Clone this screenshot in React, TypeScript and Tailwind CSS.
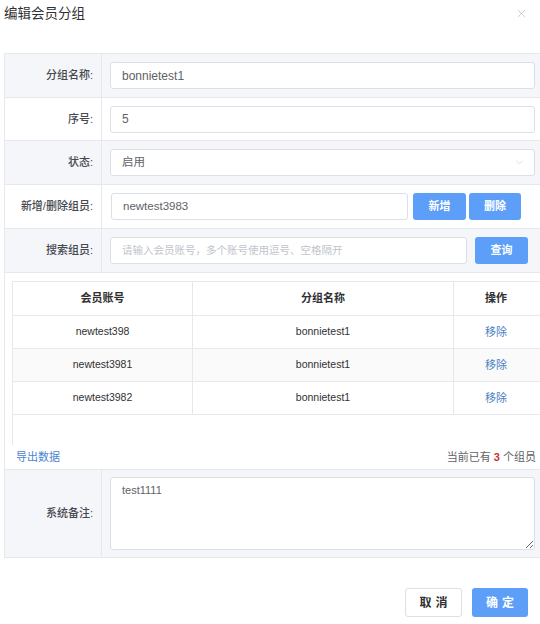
import { X, ChevronDown } from 'lucide-react';

const font = { fontFamily: '"Liberation Sans", "Noto Sans CJK SC", sans-serif' };

function Label({ children }: { children: React.ReactNode }) {
  return (
    <div className="w-[97px] shrink-0 self-stretch border-r border-[#e6e8ee] flex items-center justify-end pr-[8px] text-[11px] font-medium text-[#45484f]">
      {children}
    </div>
  );
}

const rows = [
  { acc: 'newtest398', group: 'bonnietest1' },
  { acc: 'newtest3981', group: 'bonnietest1' },
  { acc: 'newtest3982', group: 'bonnietest1' },
];

export default function App() {
  return (
    <div className="w-[540px] h-[624px] overflow-hidden bg-white relative" style={font}>
      <div className="flex items-center justify-between h-[27px] pl-[4px] pr-[12px] pt-[1px]">
        <span className="text-[13.5px] text-[#303133]">编辑会员分组</span>
        <X size={13} strokeWidth={1.1} className="text-[#a8abb2] -mt-[2px]" />
      </div>

      <div className="mt-[26px] ml-[4px] w-[540px] border-t border-l border-[#e6e8ee]">
        {/* 分组名称 */}
        <div className="flex items-center h-[44px] border-b border-[#e6e8ee] bg-[#f5f6fa]">
          <Label>分组名称:</Label>
          <div className="pl-[8px]">
            <div className="w-[425px] h-[27px] rounded-[3px] border border-[#dcdfe6] bg-white flex items-center pl-[11px] text-[12px] text-[#606266]">
              bonnietest1
            </div>
          </div>
        </div>

        {/* 序号 */}
        <div className="flex items-center h-[43px] border-b border-[#e6e8ee] bg-white">
          <Label>序号:</Label>
          <div className="pl-[8px]">
            <div className="w-[425px] h-[27px] rounded-[3px] border border-[#dcdfe6] bg-white flex items-center pl-[11px] text-[12px] text-[#606266]">
              5
            </div>
          </div>
        </div>

        {/* 状态 */}
        <div className="flex items-center h-[44px] border-b border-[#e6e8ee] bg-[#f5f6fa]">
          <Label>状态:</Label>
          <div className="pl-[8px]">
            <div className="w-[425px] h-[27px] rounded-[3px] border border-[#dcdfe6] bg-white flex items-center justify-between pl-[11px] pr-[9px] text-[11.5px] text-[#606266]">
              <span>启用</span>
              <ChevronDown size={11} strokeWidth={1.2} className="text-[#c0c4cc]" />
            </div>
          </div>
        </div>

        {/* 新增/删除组员 */}
        <div className="flex items-center h-[44px] border-b border-[#e6e8ee] bg-white">
          <Label>新增/删除组员:</Label>
          <div className="pl-[9px] flex items-center">
            <div className="w-[297px] h-[27px] rounded-[3px] border border-[#dcdfe6] bg-white flex items-center pl-[11px] text-[11.5px] text-[#606266]">
              newtest3983
            </div>
            <button className="ml-[5px] w-[53px] h-[27px] rounded-[3px] bg-[#5c9ef8] text-white text-[11px] font-bold">
              新增
            </button>
            <button className="ml-[3px] w-[52px] h-[27px] rounded-[3px] bg-[#5c9ef8] text-white text-[11px] font-bold">
              删除
            </button>
          </div>
        </div>

        {/* 搜索组员 */}
        <div className="flex items-center h-[44px] border-b border-[#e6e8ee] bg-[#f5f6fa]">
          <Label>搜索组员:</Label>
          <div className="pl-[8px] flex items-center gap-[8px]">
            <div className="w-[357px] h-[27px] rounded-[3px] border border-[#dcdfe6] bg-white flex items-center pl-[11px] text-[10.5px] text-[#c0c4cc]">
              请输入会员账号，多个账号使用逗号、空格隔开
            </div>
            <button className="w-[53px] h-[27px] rounded-[3px] bg-[#5c9ef8] text-white text-[11px] font-bold">
              查询
            </button>
          </div>
        </div>

        {/* 表格 */}
        <div className="border-b border-[#e6e8ee] bg-white pt-[8px] pl-[7px]">
          <div className="h-[164px] border-t border-l border-[#e6e8ee]">
            <div className="flex h-[34px] border-b border-[#e6e8ee] text-[11px] text-[#303133] font-semibold">
              <div className="w-[180px] border-r border-[#e6e8ee] flex items-center justify-center">会员账号</div>
              <div className="w-[261px] border-r border-[#e6e8ee] flex items-center justify-center">分组名称</div>
              <div className="w-[84px] flex items-center justify-center">操作</div>
            </div>
            {rows.map((r, i) => (
              <div
                key={r.acc}
                className={`flex h-[33px] border-b border-[#e6e8ee] text-[10.5px] text-[#303133] ${i === 1 ? 'bg-[#fafafa]' : 'bg-white'}`}
              >
                <div className="w-[180px] border-r border-[#e6e8ee] flex items-center justify-center">{r.acc}</div>
                <div className="w-[261px] border-r border-[#e6e8ee] flex items-center justify-center">{r.group}</div>
                <div className="w-[84px] flex items-center justify-center text-[11px] text-[#4a7fc4]">移除</div>
              </div>
            ))}
          </div>
          <div className="h-[24px] flex items-center justify-between pl-[4px] pr-[8px] text-[11px]">
            <span className="text-[#4a86cf]">导出数据</span>
            <span className="text-[#606266]">
              当前已有 <b className="text-[#c0392b]">3</b> 个组员
            </span>
          </div>
        </div>

        {/* 系统备注 */}
        <div className="flex h-[88px] border-b border-[#e6e8ee] bg-[#f5f6fa]">
          <Label>系统备注:</Label>
          <div className="pl-[8px] pt-[7px]">
            <textarea
              defaultValue="test1111"
              className="block w-[425px] h-[73px] rounded-[3px] border border-[#dcdfe6] bg-white px-[11px] py-[4px] text-[11px] text-[#606266] outline-none"
              style={font}
            />
          </div>
        </div>
      </div>

      <div className="flex justify-end gap-[10px] mt-[30px] pr-[12px]">
        <button className="w-[57px] h-[29px] rounded-[3px] border border-[#dcdfe6] bg-white text-[12px] text-[#303133] font-bold tracking-[4px] pl-[4px]">
          取消
        </button>
        <button className="w-[56px] h-[29px] rounded-[3px] bg-[#5c9ef8] text-white text-[12px] font-bold tracking-[4px] pl-[4px]">
          确定
        </button>
      </div>
    </div>
  );
}
